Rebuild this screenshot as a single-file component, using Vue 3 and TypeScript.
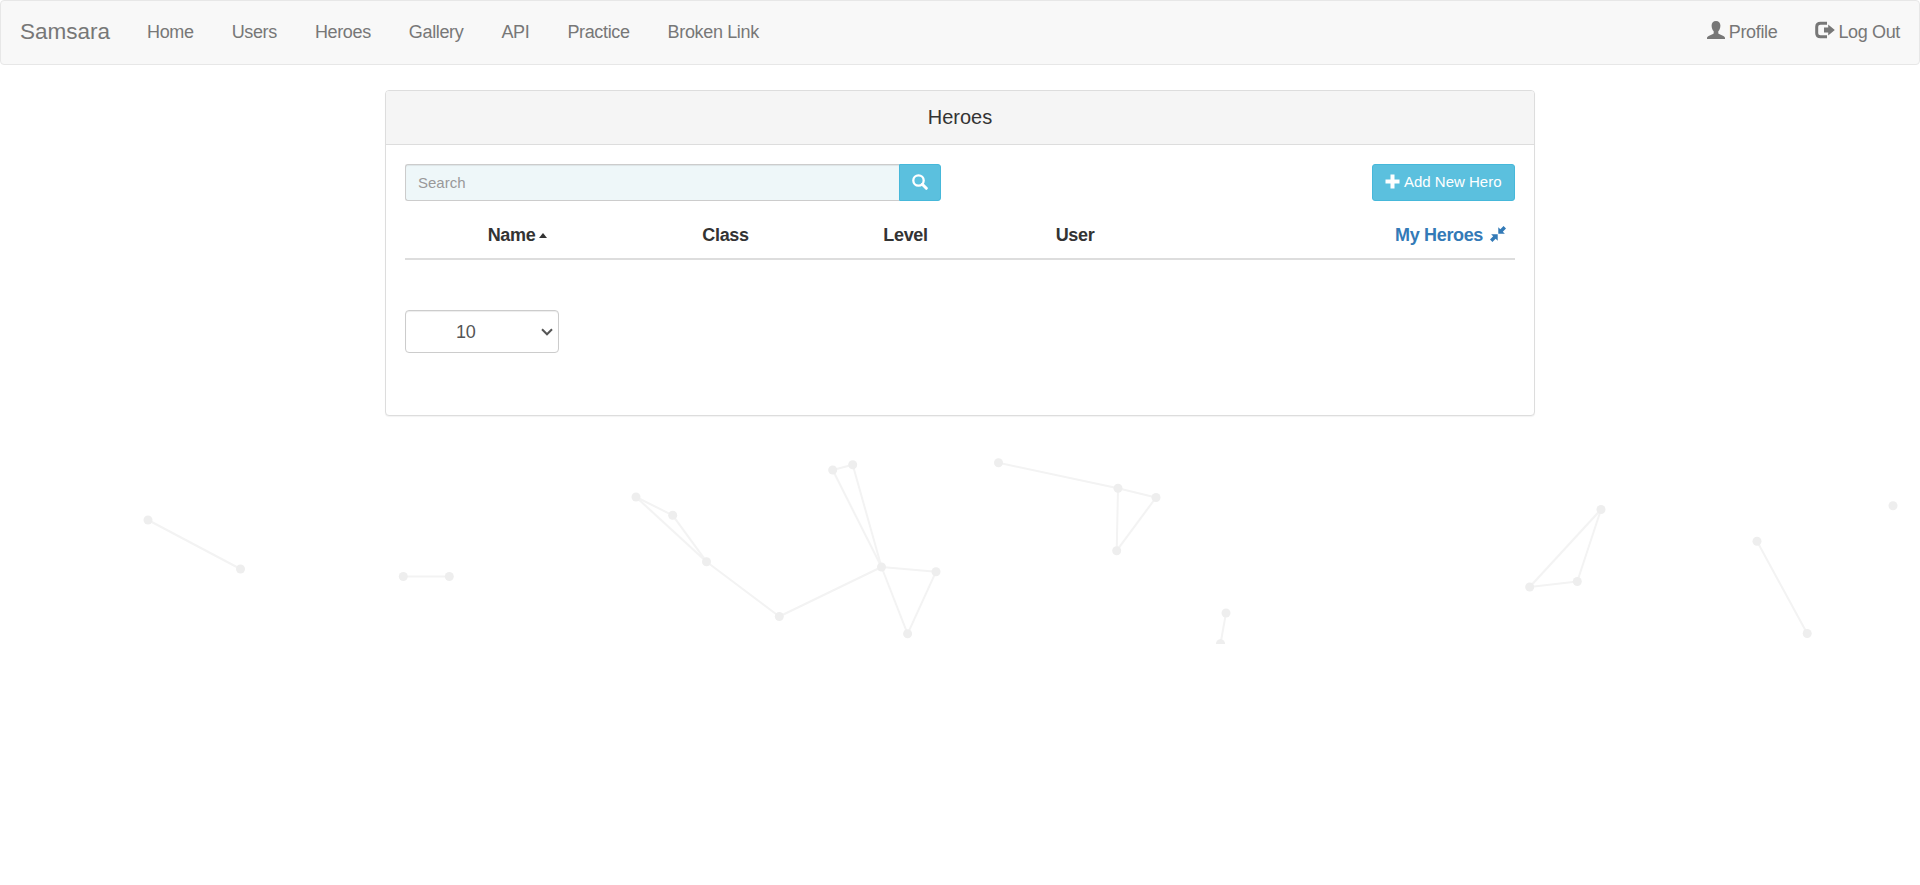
<script setup lang="ts">
const links: string[] = ['Home', 'Users', 'Heroes', 'Gallery', 'API', 'Practice', 'Broken Link']

type Point = [number, number]

const points: Point[] = [
  [148, 520], [240.5, 569], [403.3, 576.5], [449.3, 576.5],
  [636, 497], [672.7, 515.3], [706.5, 561.7], [779.3, 616.5],
  [832.7, 470], [852.7, 464.7], [881.5, 567], [936, 571.7], [907.6, 633.8],
  [998.5, 462.8], [1118, 488.3], [1156, 497.5], [1116.7, 550.7],
  [1226, 613], [1220.5, 643.8],
  [1601, 509.5], [1529.7, 587], [1577.3, 581.5],
  [1757, 541.3], [1807.2, 633.5], [1893, 505.8],
]

const edges: Point[] = [
  [0, 1], [2, 3], [4, 5], [4, 6], [5, 6], [6, 7], [7, 10], [8, 9], [8, 10], [9, 10],
  [10, 11], [10, 12], [11, 12], [13, 14], [14, 15], [14, 16], [15, 16], [17, 18],
  [19, 20], [19, 21], [20, 21], [22, 23],
]
</script>

<template>
  <div class="page">
    <svg class="network" width="1920" height="644" viewBox="0 0 1920 644" aria-hidden="true">
      <line
        v-for="([a, b], i) in edges"
        :key="'e' + i"
        :x1="points[a][0]"
        :y1="points[a][1]"
        :x2="points[b][0]"
        :y2="points[b][1]"
      />
      <circle v-for="([x, y], i) in points" :key="'p' + i" :cx="x" :cy="y" r="4.5" />
    </svg>

    <nav class="navbar">
      <a class="brand">Samsara</a>
      <ul class="nav">
        <li v-for="l in links" :key="l"><a>{{ l }}</a></li>
      </ul>
      <ul class="nav right">
        <li>
          <a>
            <svg class="icon user" viewBox="0 0 18 18">
              <path d="M9 0C6.300 0 4.600 1.800 4.600 4.500c0 2.300.8 4.600 2.100 5.800v1.600c0 .6-.3.9-.8 1.100L1.600 15C.5 15.600 0 16.300 0 17v1h18v-1c0-.7-.5-1.400-1.600-2l-4.300-2c-.5-.2-.8-.5-.8-1.100v-1.600c1.300-1.200 2.100-3.500 2.100-5.800C13.400 1.800 11.700 0 9 0z" />
            </svg>
            Profile
          </a>
        </li>
        <li>
          <a>
            <svg class="icon logout" viewBox="0 0 20 18">
              <path d="M12 2.300H5.500Q1.700 2.300 1.700 5.800v6.400q0 3.500 3.800 3.500H12" fill="none" stroke="currentColor" stroke-width="3" />
              <path d="M9 6.600h4.200V3.400L19.800 9l-6.600 5.600v-3.200H9z" />
            </svg>
            Log Out
          </a>
        </li>
      </ul>
    </nav>

    <main class="panel">
      <header class="panel-heading">Heroes</header>
      <div class="panel-body">
        <div class="toolbar">
          <div class="search">
            <input type="text" placeholder="Search" />
            <button class="btn search-btn" type="button" aria-label="Search">
              <svg viewBox="0 0 16 16">
                <circle cx="6.500" cy="6.500" r="5.200" fill="none" stroke="currentColor" stroke-width="2.300" />
                <path d="M10.300 10.300l4 4" stroke="currentColor" stroke-width="3" stroke-linecap="round" />
              </svg>
            </button>
          </div>
          <button class="btn add-btn" type="button">
            <svg viewBox="0 0 15 15">
              <path d="M5.500.5h4v5h5v4h-5v5h-4v-5h-5v-4h5z" />
            </svg>
            Add New Hero
          </button>
        </div>

        <div class="table-head">
          <span>Name<i class="caret"></i></span>
          <span>Class</span>
          <span>Level</span>
          <span>User</span>
          <a class="mine">
            My Heroes
            <svg viewBox="0 0 17 17">
              <path d="M8.800 1.200v7h7l-2.200-2.200L17 2.600 14.400 0 11 3.400zM1.200 8.800h7v7L6 13.600 2.600 17 0 14.400 3.400 11z" />
            </svg>
          </a>
        </div>

        <div class="page-size">
          <span>10</span>
          <svg viewBox="0 0 12 8"><path d="M1 1.300l5 5 5-5" /></svg>
        </div>
      </div>
    </main>
  </div>
</template>

<style>
body {
  margin: 0;
  background: #fff;
}
</style>

<style scoped>
.page {
  position: relative;
  height: 885px;
  overflow: hidden;
  font: 18px/26px "Liberation Sans", Arial, sans-serif;
  color: #333;
}
.page * {
  box-sizing: border-box;
}
.network {
  position: absolute;
  top: 0;
  left: 0;
}
.network line {
  stroke: #f3f3f3;
  stroke-width: 2;
}
.network circle {
  fill: #eee;
}
.navbar {
  position: relative;
  display: flex;
  height: 65px;
  background: #f8f8f8;
  border: 1px solid #e7e7e7;
  border-radius: 4px;
  color: #777;
}
.brand {
  width: 127px;
  padding: 18px 0 18px 19px;
  font-size: 22.500px;
}
.nav {
  display: flex;
  margin: 0;
  padding: 0;
  list-style: none;
  letter-spacing: -0.35px;
}
.nav a {
  display: flex;
  padding: 18px 19px;
}
.right {
  margin-left: auto;
}
.icon {
  fill: currentColor;
}
.user {
  width: 18px;
  height: 18px;
  margin: 2px 4px 0 0;
}
.logout {
  width: 20px;
  height: 18px;
  margin: 2px 3px 0 0;
}
.panel {
  position: relative;
  width: 1150px;
  height: 326px;
  margin: 25px auto 0;
  background: #fff;
  border: 1px solid #ddd;
  border-radius: 4px;
  box-shadow: 0 1px 1px rgba(0, 0, 0, 0.05);
}
.panel-heading {
  height: 54px;
  padding-top: 13px;
  background: #f5f5f5;
  border-bottom: 1px solid #ddd;
  border-radius: 3px 3px 0 0;
  font-size: 20px;
  text-align: center;
}
.panel-body {
  padding: 19px;
}
.toolbar {
  display: flex;
  justify-content: space-between;
  height: 37px;
}
.search {
  display: flex;
  width: 536px;
}
.search input {
  flex: 1;
  min-width: 0;
  padding: 0 12px;
  border: 1px solid #ccc;
  border-right: 0;
  border-radius: 3px 0 0 3px;
  background: #eef7f9;
  box-shadow: inset 0 1px 1px rgba(0, 0, 0, 0.075);
  font: 15px "Liberation Sans", Arial, sans-serif;
}
.search input::placeholder {
  color: #999;
}
.btn {
  display: flex;
  align-items: center;
  padding: 0 12px;
  border: 1px solid #46b8da;
  border-radius: 3px;
  background: #5bc0de;
  color: #fff;
  font: 15px "Liberation Sans", Arial, sans-serif;
}
.btn svg {
  flex: none;
  width: 15px;
  height: 15px;
  fill: currentColor;
}
.search-btn {
  width: 42px;
  padding: 0 0 2px 12px;
  border-radius: 0 3px 3px 0;
}
.search-btn svg {
  width: 16px;
  height: 16px;
}
.add-btn {
  width: 143px;
  gap: 4px;
  padding: 0 0 2px 12px;
  white-space: nowrap;
}
.table-head {
  display: grid;
  grid-template-columns: 225px 191px 169px 170px 1fr;
  height: 59px;
  padding-top: 21px;
  border-bottom: 2px solid #ddd;
  font-weight: 700;
  letter-spacing: -0.35px;
  text-align: center;
}
.caret {
  position: relative;
  top: -1px;
  display: inline-block;
  margin-left: 4px;
  vertical-align: middle;
  border: 4px solid transparent;
  border-top: 0;
  border-bottom: 5px solid #333;
}
.mine {
  display: flex;
  justify-content: flex-end;
  gap: 7px;
  padding-right: 9px;
  color: #337ab7;
}
.mine svg {
  width: 16px;
  height: 16px;
  margin-top: 4px;
  fill: currentColor;
}
.page-size {
  display: flex;
  align-items: center;
  justify-content: space-between;
  width: 154px;
  height: 43px;
  margin-top: 50px;
  padding: 0 5px 0 50px;
  border: 1px solid #ccc;
  border-radius: 4px;
  box-shadow: inset 0 1px 1px rgba(0, 0, 0, 0.075);
  color: #555;
  letter-spacing: -0.35px;
}
.page-size svg {
  width: 12px;
  height: 8px;
  fill: none;
  stroke: currentColor;
  stroke-width: 2;
}
</style>
